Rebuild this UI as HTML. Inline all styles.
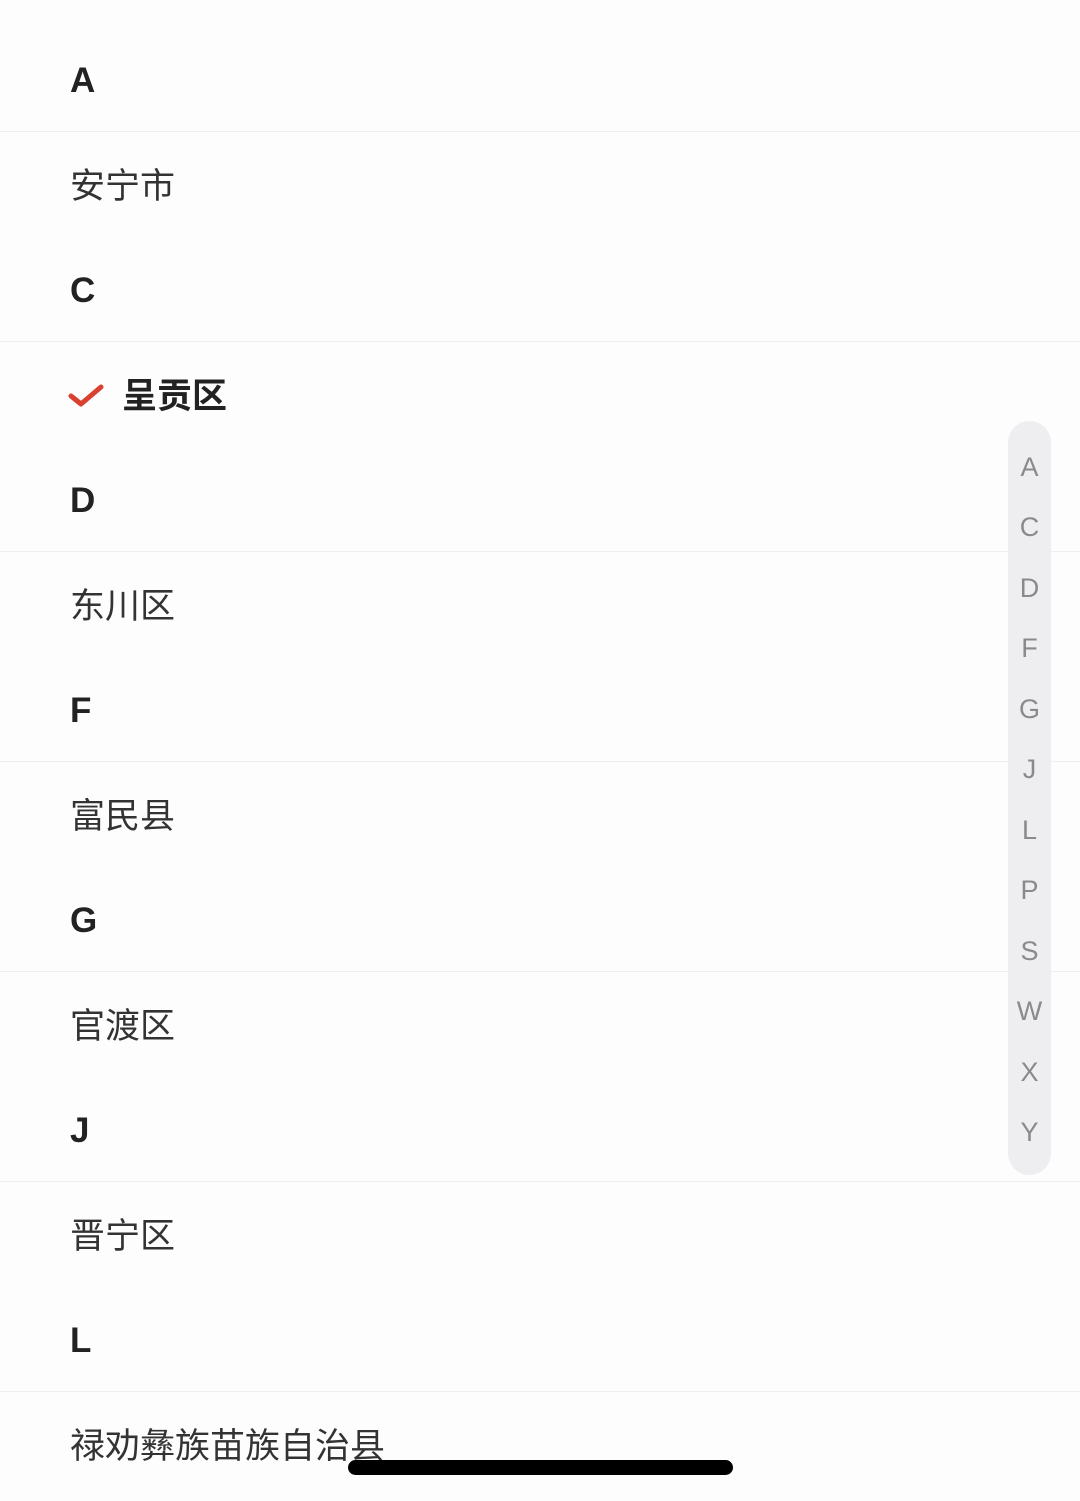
<!DOCTYPE html>
<html><head><meta charset="utf-8"><style>
body{margin:0;width:1080px;height:1497px;background:#fdfdfd;position:relative;overflow:hidden;font-family:"Liberation Sans","Noto Sans CJK SC",sans-serif;color:#222}
.r{position:absolute;left:0;width:1080px;height:105px;line-height:107px;box-sizing:border-box}
.h{font-weight:bold;font-size:35px;padding-left:70px;border-bottom:1.5px solid #efefef}
.c{font-size:35px;padding-left:70px;color:#333;line-height:109px}
.bar{position:absolute;left:1008px;top:421px;width:43px;height:754px;border-radius:22px;background:#eeeef0}
.bar div{position:absolute;left:0;width:43px;text-align:center;font-size:27px;color:#8a8a8e;line-height:30px}
.home{position:absolute;left:348px;top:1460px;width:385px;height:15px;border-radius:8px;background:#000}
</style></head><body>
<div class="r h" style="top:27px">A</div>
<div class="r c" style="top:132px">安宁市</div>
<div class="r h" style="top:237px">C</div>
<div class="r c" style="top:342px;padding-left:122px;font-weight:bold;color:#222"><svg style="position:absolute;left:68px;top:40px" width="36" height="28" viewBox="0 0 36 28"><path d="M3 14 L13 22 L33 5" fill="none" stroke="#d9402f" stroke-width="5" stroke-linecap="round" stroke-linejoin="round"/></svg>呈贡区</div>
<div class="r h" style="top:447px">D</div>
<div class="r c" style="top:552px">东川区</div>
<div class="r h" style="top:657px">F</div>
<div class="r c" style="top:762px">富民县</div>
<div class="r h" style="top:867px">G</div>
<div class="r c" style="top:972px">官渡区</div>
<div class="r h" style="top:1077px">J</div>
<div class="r c" style="top:1182px">晋宁区</div>
<div class="r h" style="top:1287px">L</div>
<div class="r c" style="top:1392px">禄劝彝族苗族自治县</div>
<div class="bar">
<div style="top:31px">A</div><div style="top:91px">C</div><div style="top:152px">D</div><div style="top:212px">F</div><div style="top:273px">G</div><div style="top:333px">J</div><div style="top:394px">L</div><div style="top:454px">P</div><div style="top:515px">S</div><div style="top:575px">W</div><div style="top:636px">X</div><div style="top:696px">Y</div>
</div>
<div class="home"></div>
</body></html>
